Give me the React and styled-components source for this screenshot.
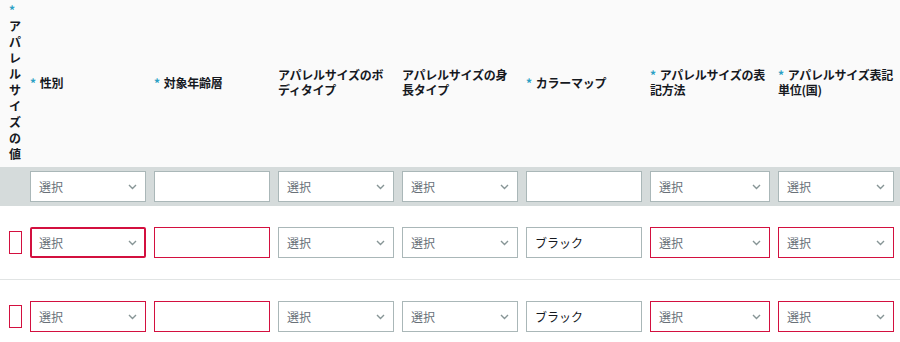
import styled, { createGlobalStyle } from "styled-components";

const GlobalStyle = createGlobalStyle`
  body {
    margin: 0;
    background: #fff;
    font-family: "Noto Sans CJK JP", "Noto Sans", sans-serif;
  }
`;

const columns = [
  { label: "性別", required: true, kind: "select" },
  { label: "対象年齢層", required: true, kind: "input" },
  { label: "アパレルサイズのボディタイプ", kind: "select" },
  { label: "アパレルサイズの身長タイプ", kind: "select" },
  { label: "カラーマップ", required: true, kind: "input", value: "ブラック" },
  { label: "アパレルサイズの表記方法", required: true, kind: "select" },
  { label: "アパレルサイズ表記単位(国)", required: true, kind: "select" },
];

const Chevron = () => (
  <svg width="9" height="6" viewBox="0 0 9 6">
    <path d="M1 1l3.5 3.5L8 1" fill="none" stroke="#879596" strokeWidth="1.4" />
  </svg>
);

function Field({ col, error, focused, filter }) {
  const isError = error && col.required;
  if (col.kind === "select") {
    return (
      <SelectBox $error={isError} $focused={focused}>
        <span>選択</span>
        <Chevron />
      </SelectBox>
    );
  }
  return (
    <InputBox $error={isError && !col.value}>
      {filter ? "" : col.value}
    </InputBox>
  );
}

export default function App() {
  return (
    <>
      <GlobalStyle />
      <Table>
        <HeaderRow>
          <FirstHead>
            <Star>*</Star> アパレルサイズの値
          </FirstHead>
          {columns.map((c) => (
            <HeadCell key={c.label}>
              <span>
                {c.required && <Star $gap>*</Star>}
                {c.label}
              </span>
            </HeadCell>
          ))}
        </HeaderRow>

        <FilterRow>
          <Cell />
          {columns.map((c) => (
            <Cell key={c.label}>
              <Field col={c} filter />
            </Cell>
          ))}
        </FilterRow>

        {[0, 1].map((r) => (
          <DataRow key={r}>
            <Cell>
              <Check />
            </Cell>
            {columns.map((c, i) => (
              <Cell key={c.label}>
                <Field col={c} error focused={r === 0 && i === 0} />
              </Cell>
            ))}
          </DataRow>
        ))}
      </Table>
    </>
  );
}

const RED = "#d3103f";

const Table = styled.div`
  width: 900px;
  overflow: hidden;
`;

const Grid = styled.div`
  display: grid;
  grid-template-columns: 26px repeat(5, 124px) 128px 124px 2px;
  align-items: center;
`;

const HeaderRow = styled(Grid)`
  height: 167px;
  background: #fafafa;
  box-sizing: border-box;
  padding-bottom: 3px;
`;

const HeadCell = styled.div`
  padding: 0 4px;
  font-size: 12px;
  font-weight: 700;
  line-height: 15px;
  letter-spacing: -0.25px;
  color: #16191f;
  word-break: break-all;
`;

const FirstHead = styled(HeadCell)`
  padding: 0 2px 0 9px;
  line-height: 16px;
  letter-spacing: 0;
`;

const Star = styled.span`
  color: #2b9fc4;
  font-weight: 700;
  margin-right: ${(p) => (p.$gap ? "4px" : "0")};
`;

const FilterRow = styled(Grid)`
  height: 39px;
  background: #d5dbdb;
`;

const DataRow = styled(Grid)`
  height: 73px;
  background: #fff;
  border-bottom: 1px solid #e1e4e4;
`;

const Cell = styled.div`
  padding: 0 4px;
  display: flex;
  align-items: center;
  &:first-child {
    padding: 0 4px 0 9px;
  }
`;

const Box = styled.div`
  flex: 1;
  height: 31px;
  box-sizing: border-box;
  background: #fff;
  border: 1px solid ${(p) => (p.$error ? RED : "#aab7b8")};
  font-size: 12px;
  display: flex;
  align-items: center;
  padding: 0 8px;
`;

const SelectBox = styled(Box)`
  justify-content: space-between;
  color: #687078;
  border-width: ${(p) => (p.$focused ? "2px" : "1px")};
  border-radius: ${(p) => (p.$focused ? "2px" : "0")};
  padding: 0 ${(p) => (p.$focused ? "7px" : "8px")};
`;

const InputBox = styled(Box)`
  color: #16191f;
`;

const Check = styled.div`
  width: 13px;
  height: 23px;
  flex-shrink: 0;
  box-sizing: border-box;
  border: 1px solid ${RED};
  background: #fff;
`;
